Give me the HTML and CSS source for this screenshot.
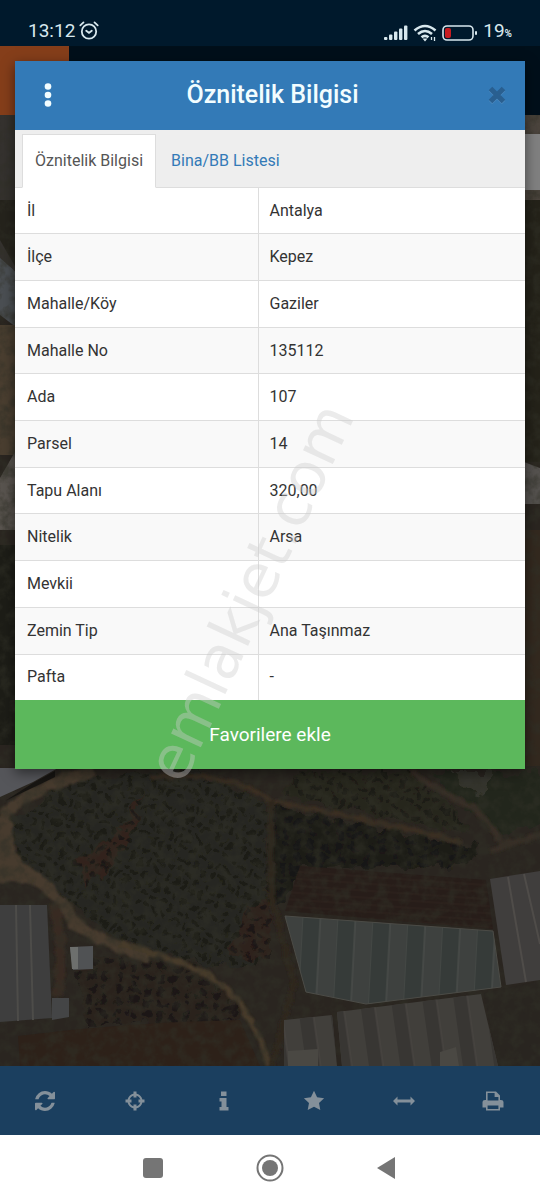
FILE: index.html
```
<!DOCTYPE html>
<html lang="tr">
  <head>
    <meta charset="UTF-8" />
    <meta name="viewport" content="width=device-width, initial-scale=1" />
    <title>Öznitelik Bilgisi</title>
    <link rel="stylesheet" href="styles.css">
  </head>
  <body>
    <div class="screen">
      <!-- map -->
      <svg class="map" viewBox="0 115 540 951" preserveAspectRatio="xMidYMid slice" aria-hidden="true">
        <defs>
          <pattern id="trees" width="12" height="10" patternUnits="userSpaceOnUse" patternTransform="rotate(-58)">
            <circle cx="5" cy="5" r="3" fill="#12130f" opacity=".6" />
          </pattern>
          <pattern id="bushes" width="14" height="12" patternUnits="userSpaceOnUse" patternTransform="rotate(4)">
            <circle cx="6" cy="6" r="4" fill="#12110f" opacity=".6" />
          </pattern>
          <pattern id="furrows" width="20" height="7" patternUnits="userSpaceOnUse" patternTransform="rotate(4)">
            <path d="M0 2h20" stroke="#332720" opacity=".6" />
          </pattern>
          <pattern id="panels" width="35" height="20" patternUnits="userSpaceOnUse" patternTransform="rotate(3)">
            <path d="M0 0h18v20h-18z" fill="#363b39" />
            <path d="M0 0v20M18 0v20" stroke="#50524f" stroke-width="1" />
          </pattern>
          <pattern id="roof" width="31" height="20" patternUnits="userSpaceOnUse" patternTransform="rotate(-8)">
            <path d="M0 0h14v20h-14z" fill="#383633" />
            <path d="M14 0v20" stroke="#4b4844" />
          </pattern>
          <!-- uneven crowns and road edges -->
          <filter id="rough" x="-5%" y="-5%" width="110%" height="110%">
            <feTurbulence type="fractalNoise" baseFrequency=".07" numOctaves="3" seed="4" />
            <feDisplacementMap in="SourceGraphic" scale="18" xChannelSelector="R" yChannelSelector="G" />
            <feGaussianBlur stdDeviation=".7" />
          </filter>
          <filter id="edge" x="-5%" y="-5%" width="110%" height="110%">
            <feTurbulence type="fractalNoise" baseFrequency=".09" numOctaves="2" seed="2" />
            <feDisplacementMap in="SourceGraphic" scale="7" xChannelSelector="R" yChannelSelector="G" />
            <feGaussianBlur stdDeviation="1" />
          </filter>
          <filter id="soil" x="0" y="0" width="100%" height="100%">
            <feTurbulence type="fractalNoise" baseFrequency=".09" numOctaves="4" seed="8" />
            <feColorMatrix values="0 0 0 0 .03  0 0 0 0 .03  0 0 0 0 .02  2.6 0 0 0 -1" />
          </filter>
        </defs>
        <rect y="115" width="540" height="951" fill="#2a2520" />
        <!-- left and right edges -->
        <path d="M0 115h16v155H0z" fill="#35322f" />
        <path d="M0 200h16v68L0 240z" fill="#25231c" />
        <path d="M0 258l16 14v55L0 315z" fill="#4b4f53" />
        <path d="M0 325h16v130H0z" fill="#4a3e30" />
        <path d="M0 478l16-28v80H0z" fill="#59544f" />
        <path d="M0 545h16v200H0z" fill="#1d1d17" />
        <path d="M524 115h16v85h-16z" fill="#4b443d" />
        <path d="M524 200h16v262h-16z" fill="#242219" />
        <path d="M524 462l16 6v36h-16z" fill="#55524f" />
        <path d="M524 530h16v236h-16z" fill="#33291f" />
        <!-- orchards -->
        <g filter="url(#rough)">
          <path d="M6 824L78 778 200 770 268 805 270 960 210 968 120 938 70 905 20 865z" fill="#272720" />
          <path d="M78 860l45-35 20-35-12 50-45 50z" fill="#30231c" />
          <path d="M245 910l25-10v60l-40-5z" fill="#2f201b" />
          <path d="M6 824L78 778 200 770 268 805 270 960 210 968 120 938 70 905 20 865z" fill="url(#trees)" />
          <path d="M75 955l120 10 45 45-5 10-150 5z" fill="#29231d" />
          <path d="M75 955l120 10 45 45-5 10-150 5z" fill="url(#bushes)" />
          <path d="M272 806l205 40-5 20-170 2-20 40-12-10z" fill="#1e1c17" />
          <path d="M272 806l205 40-5 20-170 2-20 40-12-10z" fill="url(#bushes)" />
          <path d="M300 772h110l40 30 20 30-60-8-130-30z" fill="#28251d" />
          <path d="M300 772h110l40 30 20 30-60-8-130-30z" fill="url(#trees)" />
          <path d="M430 772h125v50l-60 12z" fill="#22261d" />
          <path d="M453 772h43l-12 22-22-8z" fill="#4a463e" opacity=".5" />
        </g>
        <!-- fields -->
        <path d="M300 866l186 14 7 49-208-18z" fill="#271d19" />
        <path d="M300 866l186 14 7 49-208-18z" fill="url(#furrows)" />
        <path d="M18 1036q110-14 222-16l20 46H20z" fill="#2d2119" />
        <path d="M484 993l56-12v85h-42z" fill="#292520" />
        <!-- roads -->
        <g fill="none" stroke-linejoin="round" filter="url(#edge)">
          <path d="M94 771Q35 786 6 812 4 850 20 868 58 890 75 924 102 943 150 957" stroke="#463b2d" stroke-width="12" />
          <path d="M0 820q6 40 32 58H0z" fill="#463b2d" stroke="#463b2d" stroke-width="8" />
          <path d="M120 943Q190 963 215 980 250 1003 269 1066" stroke="#463b2c" stroke-width="6" />
          <path d="M55 905q9 40 3 90" stroke="#382c22" stroke-width="10" />
          <path d="M150 777q75-8 122 24 52 10 110 23 55 10 78 19" stroke="#3a2f24" stroke-width="5" />
          <path d="M410 772q40 25 67 38l26 32M490 850l54-17" stroke="#382e25" stroke-width="6" />
          <path d="M271 800v95l23 88-22 83" stroke="#2f251e" stroke-width="6" />
        </g>
        <rect y="115" width="540" height="951" filter="url(#soil)" opacity=".55" />
        <!-- roofs -->
        <path d="M0 768h58l-25 14L0 797z" fill="#55565a" />
        <path d="M33 783l22-12v6l-50 24z" fill="#171512" />
        <path d="M0 905h47l5 113-52 4z" fill="#3e3e3e" />
        <path d="M16 905l2 116M30 905l3 115" stroke="#4d4c49" stroke-width="2" />
        <path d="M52 998h17v19l-17 3z" fill="#444546" />
        <path d="M70 947l23-1v23l-20 1z" fill="#505254" />
        <path d="M70 947h8v22h-6z" fill="#6d6f6d" />
        <path d="M285 916l208 15 8 56-135 17-60-12z" fill="#3e413f" />
        <path d="M285 916l208 15 8 56-135 17-60-12z" fill="url(#panels)" stroke="#4b4b46" />
        <path d="M490 879l50-8v109l-34 5z" fill="#403e3d" />
        <path d="M508 877l18 105M524 874l16 70" stroke="#4f4c49" stroke-width="2" />
        <path d="M284 1020l48-5 5 51h-53zM337 1012l144-18 17 72H342z" fill="#413f3b" />
        <path d="M284 1020l48-5 5 51h-53zM337 1012l144-18 17 72H342z" fill="url(#roof)" />
        <path d="M288 1051l30-2v17h-30zM440 1052l16-5 3 19h-19z" fill="#4a4843" />
      </svg>

      <header class="status">
        <div class="status-left">
          <span>13:12</span>
          <svg width="20" height="20" viewBox="0 0 20 20" fill="none" stroke="#d8e8ee" stroke-width="1.8" stroke-linecap="round">
            <circle cx="10" cy="10.500" r="7.200" />
            <path d="M7.200 9.800l2.800 2 2.800-2M1.300 4.400l3.200-3M18.700 4.400l-3.200-3" />
          </svg>
        </div>
        <div class="status-right">
          <svg width="25" height="18" viewBox="0 0 25 18" fill="#d8e8ee">
            <rect x="1" y="13" width="3.400" height="3" rx="1" />
            <rect x="6" y="10.500" width="3.400" height="5.500" rx="1" />
            <rect x="11" y="7.500" width="3.400" height="8.500" rx="1" />
            <rect x="16" y="4.500" width="3.400" height="11.500" rx="1" />
            <rect x="21" y="1.500" width="3.400" height="14.500" rx="1" />
          </svg>
          <svg width="24" height="18" viewBox="0 0 24 18" fill="none" stroke="#d8e8ee" stroke-width="2.600">
            <path d="M1.500 6.500q10.500-9 21 0M5 10q7-6 14 0M8.500 13.300q3.500-3 7 0" />
            <path d="M9.500 14.500h5L12 17.500z" fill="#d8e8ee" stroke="none" />
            <path d="M18.500 13v3M21.500 13v4" stroke-width="1.300" />
          </svg>
          <svg width="36" height="18" viewBox="0 0 36 18">
            <rect x="1" y="2" width="30" height="14" rx="4" fill="none" stroke="#d8e8ee" stroke-width="1.600" />
            <rect x="3" y="4" width="6" height="10" rx="2" fill="#c81c20" />
            <rect x="33" y="7" width="2" height="4" rx="1" fill="#d8e8ee" />
          </svg>
          <span>19<small>%</small></span>
        </div>
      </header>
      <div class="topbar"><div class="topbar-logo"></div></div>
      <div class="search"></div>

      <footer class="toolbar">
        <button class="tool" aria-label="Yenile">
          <svg width="20" height="20" viewBox="0 0 1536 1536"><path d="M1511 928q0 5-1 7-64 268-268 434.500T764 1536q-146 0-282.500-55T238 1324l-129 129q-19 19-45 19t-45-19-19-45V960q0-26 19-45t45-19h448q26 0 45 19t19 45-19 45l-137 137q71 66 161 102t187 36q134 0 250-65t186-179q11-17 53-117 8-23 30-23h192q13 0 22.500 9.500t9.500 22.500zm25-800v448q0 26-19 45t-45 19h-448q-26 0-45-19t-19-45 19-45l138-138Q969 256 768 256q-134 0-250 65T332 500q-11 17-53 117-8 23-30 23H50q-13 0-22.500-9.500T18 608v-7q65-268 270-434.500T768 0q146 0 284 55.500T1297 212l130-129q19-19 45-19t45 19 19 45z" /></svg>
        </button>
        <button class="tool" aria-label="Konum">
          <svg width="22" height="22" viewBox="0 0 22 22"><path d="M11 1.500v6M11 14.500v6M1.500 11h6M14.500 11h6" stroke="#84909a" stroke-width="3" /><path fill-rule="evenodd" d="M11 3.500a7.500 7.500 0 1 0 .01 0zM11 5.500a5.500 5.500 0 1 1-.01 0z" /></svg>
        </button>
        <button class="tool" aria-label="Bilgi">
          <svg width="22" height="22" viewBox="0 0 22 22"><path d="M8 1.500h5.500V6H8zM6.500 8h7v9h2v3.500h-9V17h2v-5.500h-2z" /></svg>
        </button>
        <button class="tool" aria-label="Favoriler">
          <svg width="22" height="22" viewBox="0 0 22 22"><path d="M11 .8l3.100 6.400 7 1-5.100 4.900 1.300 7L11 16.800l-6.300 3.300 1.300-7L.9 8.200l7-1z" /></svg>
        </button>
        <button class="tool" aria-label="Ölçüm">
          <svg width="22" height="22" viewBox="0 0 22 22"><path d="M0 11l4.500-4.500V9.500h13V6.500L22 11l-4.500 4.500V12.500h-13v3z" /></svg>
        </button>
        <button class="tool" aria-label="Yazdır">
          <svg width="22" height="22" viewBox="0 0 22 22"><path fill-rule="evenodd" d="M4 1.500h10l4 4V10h1q2.500 0 2.500 2v5.500H18v3H4v-3H.5V12q0-2 2.500-2h1zM5.600 3v7.500h10.800V7h-3.800V3zM5.600 15.500V19h10.800v-3.500z" /></svg>
        </button>
      </footer>

      <section class="modal" role="dialog" aria-labelledby="title">
        <div class="modal-hd">
          <button class="icon-btn" aria-label="Menü">
            <svg width="8" height="24" viewBox="0 0 8 24" fill="#f2fdff"><circle cx="4" cy="3.500" r="3.300" /><circle cx="4" cy="12" r="3.300" /><circle cx="4" cy="20.500" r="3.300" /></svg>
          </button>
          <h1 class="title" id="title">Öznitelik Bilgisi</h1>
          <button class="icon-btn" aria-label="Kapat">
            <svg width="18" height="18" viewBox="0 0 18 18" stroke-width="5"><path d="M2.500 3.500l13 13M15.500 3.500l-13 13" stroke="#4a88bd" /><path d="M2.500 2.500l13 13M15.500 2.500l-13 13" stroke="#295f90" /></svg>
          </button>
        </div>
        <div class="tabs" role="tablist">
          <button class="tab current" role="tab" aria-selected="true">Öznitelik Bilgisi</button>
          <button class="tab" role="tab" aria-selected="false">Bina/BB Listesi</button>
        </div>
        <table class="info">
          <tbody>
            <tr><th scope="row">İl</th><td>Antalya</td></tr>
            <tr><th scope="row">İlçe</th><td>Kepez</td></tr>
            <tr><th scope="row">Mahalle/Köy</th><td>Gaziler</td></tr>
            <tr><th scope="row">Mahalle No</th><td>135112</td></tr>
            <tr><th scope="row">Ada</th><td>107</td></tr>
            <tr><th scope="row">Parsel</th><td>14</td></tr>
            <tr><th scope="row">Tapu Alanı</th><td>320,00</td></tr>
            <tr><th scope="row">Nitelik</th><td>Arsa</td></tr>
            <tr><th scope="row">Mevkii</th><td></td></tr>
            <tr><th scope="row">Zemin Tip</th><td>Ana Taşınmaz</td></tr>
            <tr><th scope="row">Pafta</th><td>-</td></tr>
          </tbody>
        </table>
        <button class="favorite">Favorilere ekle</button>
      </section>
    </div>

    <nav class="android">
      <button class="key" aria-label="Son uygulamalar"><svg width="28" height="28" viewBox="0 0 28 28"><rect x="4" y="4" width="20" height="20" rx="3" /></svg></button>
      <button class="key" aria-label="Ana ekran"><svg width="28" height="28" viewBox="0 0 28 28"><circle cx="14" cy="14" r="12.500" fill="none" stroke="#757575" stroke-width="2" /><circle cx="14" cy="14" r="8" /></svg></button>
      <button class="key" aria-label="Geri"><svg width="28" height="28" viewBox="0 0 28 28"><path d="M4 14L22 3v22z" /></svg></button>
    </nav>
    <div class="watermark"><span>emlakjet.com</span></div>
  </body>
</html>
```

FILE: styles.css
```
* {
  box-sizing: border-box;
}
body {
  margin: 0;
  min-height: 100vh;
  display: flex;
  flex-direction: column;
  position: relative;
  font-family: Roboto, "Liberation Sans", sans-serif;
  font-size: 16px;
  color: #333;
}
button {
  margin: 0;
  padding: 0;
  border: 0;
  background: none;
  font: inherit;
  cursor: pointer;
}
svg {
  display: block;
}

.screen {
  position: relative;
  flex: 1;
  display: flex;
  flex-direction: column;
  background-color: #2b2720;
}
/* the map lies under everything */
.map {
  position: absolute;
  top: 115px;
  left: 0;
  width: 100%;
  height: calc(100% - 184px);
}

/* status bar */
.status {
  height: 46px;
  padding: 15px 28px 0;
  display: flex;
  justify-content: space-between;
  align-items: flex-start;
  background-color: #00192c;
  color: #d8e8ee;
  font-size: 19px;
  line-height: 32px;
}
.status-left,
.status-right {
  display: flex;
  align-items: center;
  gap: 4px;
}
.status-right {
  gap: 5px;
}
.status small {
  font-size: 10px;
  font-weight: 700;
}
.topbar {
  height: 69px;
  background-color: #000f1a;
}
.topbar-logo {
  width: 69px;
  height: 69px;
  background-color: #853e1a;
}
.search {
  position: relative;
  height: 56px;
  margin: 19px 0 0 15px;
  background-color: #808080;
}

/* bottom toolbar */
.toolbar {
  position: relative;
  margin-top: auto;
  height: 69px;
  padding-right: 2px;
  display: flex;
  background-color: #1b3f5f;
}
.tool {
  flex: 1;
  display: flex;
  justify-content: center;
  align-items: center;
}
.tool svg {
  fill: #84909a;
}

/* modal over the map */
.modal {
  position: absolute;
  top: 61px;
  left: 15px;
  right: 15px;
  background-color: #fff;
  box-shadow: 0 4px 12px rgba(0, 0, 0, .5);
}
.modal-hd {
  height: 69px;
  padding: 0 8px 2px 13px;
  display: flex;
  align-items: center;
  background-color: #337ab7;
}
.icon-btn {
  width: 40px;
  height: 40px;
  display: flex;
  justify-content: center;
  align-items: center;
}
.title {
  flex: 1;
  margin: 0;
  text-align: center;
  font-size: 25px;
  line-height: 32px;
  font-weight: 500;
  color: #f2fdff;
}
.tabs {
  height: 58px;
  padding: 4px 7px 0;
  display: flex;
  background-color: #eee;
  border-bottom: 1px solid #ddd;
}
.tab {
  height: 54px;
  padding: 0 15px 2px;
  color: #337ab7;
}
.tab.current {
  padding: 0 12px 2px;
  color: #555;
  background-color: #fff;
  border: 1px solid #ddd;
  border-bottom-color: #fff;
}
.info {
  width: 100%;
  height: 512px;
  border-collapse: collapse;
}
.info th,
.info td {
  padding: 0 12px;
  border-bottom: 1px solid #ddd;
  font-weight: 400;
  line-height: 24px;
  text-align: left;
}
.info th {
  width: 243px;
}
.info td {
  padding-left: 11px;
  border-left: 1px solid #ddd;
}
.info tr:nth-child(even) {
  background-color: #f9f9f9;
}
.info tr:last-child > * {
  border-bottom: 0;
}
.favorite {
  display: block;
  width: 100%;
  height: 69px;
  background-color: #5cb85c;
  color: #fff;
  font-size: 19px;
}

/* android navigation keys */
.android {
  height: 65px;
  padding: 0 95px;
  display: flex;
  background-color: #fff;
}
.key {
  flex: 1;
  display: flex;
  justify-content: center;
  align-items: center;
}
.key svg {
  fill: #757575;
}

.watermark {
  position: absolute;
  inset: 0;
  padding: 0 40px 16px 0;
  display: flex;
  justify-content: center;
  align-items: center;
  overflow: hidden;
  pointer-events: none;
}
.watermark span {
  font-family: "DejaVu Sans", sans-serif;
  font-size: 60px;
  line-height: 60px;
  color: rgba(205, 205, 205, .4);
  transform: rotate(-65deg);
}
```
